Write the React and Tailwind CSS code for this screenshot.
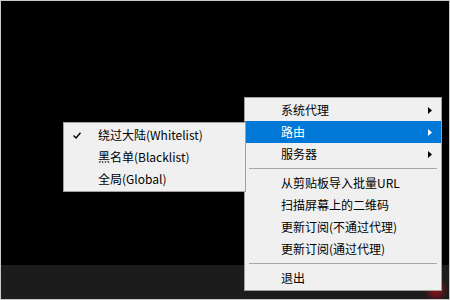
import React from 'react';

const FONT = { fontFamily: '"Microsoft YaHei", "Noto Sans CJK SC", "Noto Sans", sans-serif' };

// маленькая стрелка подменю
const Arrow = ({ white }) => (
  <svg width="4" height="7" viewBox="0 0 4 7" className="block">
    <path d="M0 0 L4 3.5 L0 7 Z" fill={white ? '#ffffff' : '#000000'} />
  </svg>
);

const Check = () => (
  <svg width="8" height="7" viewBox="0 0 8 7" className="block">
    <path d="M0.5 3.5 L3 6 L7.5 0.8" fill="none" stroke="#000" strokeWidth="1.4" />
  </svg>
);

const Separator = () => (
  <div className="h-[7px] flex items-center px-[4px]">
    <div className="h-px w-full bg-[#a8a8a8]" />
  </div>
);

const MenuItem = ({ label, sub, active, checked, indent = 'pl-[36px]' }) => (
  <div
    className={`h-[22px] flex items-center ${indent} pr-[9px] text-[12px] leading-[22px] ${
      active ? 'bg-[#0078d7] text-white' : 'text-black'
    } relative`}
  >
    {checked && (
      <span className="absolute left-[9px] top-[8px]">
        <Check />
      </span>
    )}
    <span className="flex-1 whitespace-nowrap">{label}</span>
    {sub && <Arrow white={active} />}
  </div>
);

const App = () => {
  return (
    <div className="w-[450px] h-[300px] border border-[#c8c8c8] bg-black relative flex flex-col overflow-hidden" style={FONT}>
      <div className="flex-1" />
      <div className="h-[34px] bg-[#1c1c1c]" />

      {/* значок в трее под меню */}
      <div className="absolute left-[427px] top-[281px] w-[16px] h-[16px] rounded-full bg-[#b0101a] blur-[3px] opacity-70" />

      {/* главное меню */}
      <div className="absolute left-[243px] top-[96px] w-[198px] bg-[#f0f0f0] border border-[#a0a0a0] py-[1px]">
        <MenuItem label="系统代理" sub />
        <MenuItem label="路由" sub active />
        <MenuItem label="服务器" sub />
        <Separator />
        <MenuItem label="从剪贴板导入批量URL" />
        <MenuItem label="扫描屏幕上的二维码" />
        <MenuItem label="更新订阅(不通过代理)" />
        <MenuItem label="更新订阅(通过代理)" />
        <Separator />
        <MenuItem label="退出" />
      </div>

      {/* подменю маршрутизации */}
      <div className="absolute left-[62px] top-[121px] w-[183px] bg-[#f0f0f0] border border-[#a0a0a0] py-[1px]">
        <MenuItem label="绕过大陆(Whitelist)" checked indent="pl-[34px]" />
        <MenuItem label="黑名单(Blacklist)" indent="pl-[34px]" />
        <MenuItem label="全局(Global)" indent="pl-[34px]" />
      </div>
    </div>
  );
};

export default App;
